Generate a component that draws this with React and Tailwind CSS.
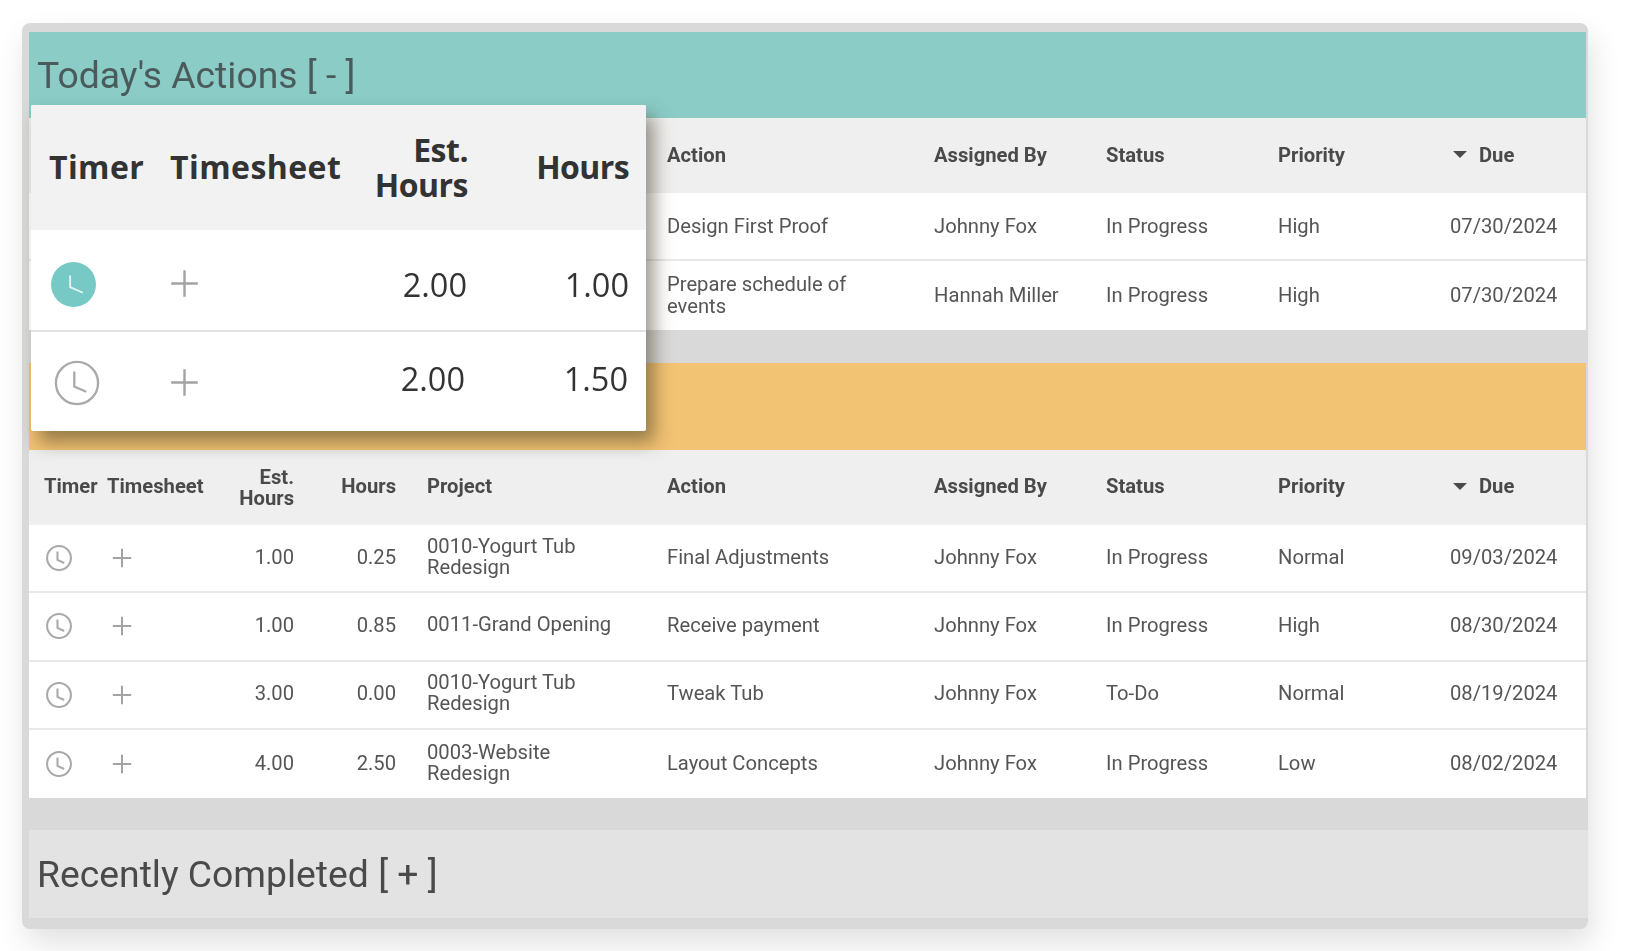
import React from "react";

const cols = "grid grid-cols-[78px_123px_64px_102px_31px_240px_267px_172px_172px_172px_1fr] items-center";

function ClockIcon({ className, hand = "#a9a9a9", ring = "#a9a9a9", width = 1.9 }) {
  return (
    <svg viewBox="0 0 24 24" className={className} fill="none">
      <circle cx="12" cy="12" r="11" stroke={ring} strokeWidth={width} />
      <path d="M10.6 6 V13.8 L16.8 16.6" stroke={hand} strokeWidth={width} />
    </svg>
  );
}

function PlusIcon({ className, width = 2.4 }) {
  return (
    <svg viewBox="0 0 24 24" className={className} fill="none">
      <path d="M12 1 V23 M1 12 H23" stroke="#a3a3a3" strokeWidth={width} />
    </svg>
  );
}

function HeaderRow({ full }) {
  return (
    <div className={`${cols} h-[75px] bg-[#efefef] pb-[2px] font-bold text-[#4a4a4a]`}>
      <div className="pl-[15px]">{full && "Timer"}</div>
      <div>{full && "Timesheet"}</div>
      <div className="pt-[3px] text-right leading-[21px]">
        {full && (
          <>
            Est.
            <br />
            Hours
          </>
        )}
      </div>
      <div className="text-right">{full && "Hours"}</div>
      <div />
      <div>{full && "Project"}</div>
      <div>Action</div>
      <div>Assigned By</div>
      <div>Status</div>
      <div>Priority</div>
      <div className="flex items-center gap-[12px] pl-[3px]">
        <span className="h-0 w-0 border-x-[7px] border-t-[7px] border-x-transparent border-t-[#4a4a4a]" />
        Due
      </div>
    </div>
  );
}

function Row({ row, last }) {
  // rows with a project sit a little higher than their icons
  const lift = row.project ? "pb-[3px]" : "";
  return (
    <div className={`${cols} h-[68.3px] bg-white ${lift} ${last ? "" : "border-b-2 border-[#e9e9e9]"}`}>
      <div className="pl-[17px] pt-[3px]">{row.project && <ClockIcon className="h-[26px] w-[26px]" />}</div>
      <div className="pl-[5px] pt-[3px]">{row.project && <PlusIcon className="h-[20px] w-[20px]" />}</div>
      <div className="text-right">{row.est}</div>
      <div className="text-right">{row.hours}</div>
      <div />
      <div className="w-[205px] leading-[21px]">{row.project}</div>
      <div className="w-[205px]">{row.action}</div>
      <div>{row.by}</div>
      <div>{row.status}</div>
      <div>{row.priority}</div>
      <div>{row.due}</div>
    </div>
  );
}

const todayRows = [
  { action: "Design First Proof", by: "Johnny Fox", status: "In Progress", priority: "High", due: "07/30/2024" },
  { action: "Prepare schedule of events", by: "Hannah Miller", status: "In Progress", priority: "High", due: "07/30/2024" },
];

const upcomingRows = [
  { est: "1.00", hours: "0.25", project: "0010-Yogurt Tub Redesign", action: "Final Adjustments", by: "Johnny Fox", status: "In Progress", priority: "Normal", due: "09/03/2024" },
  { est: "1.00", hours: "0.85", project: "0011-Grand Opening", action: "Receive payment", by: "Johnny Fox", status: "In Progress", priority: "High", due: "08/30/2024" },
  { est: "3.00", hours: "0.00", project: "0010-Yogurt Tub Redesign", action: "Tweak Tub", by: "Johnny Fox", status: "To-Do", priority: "Normal", due: "08/19/2024" },
  { est: "4.00", hours: "2.50", project: "0003-Website Redesign", action: "Layout Concepts", by: "Johnny Fox", status: "In Progress", priority: "Low", due: "08/02/2024" },
];

function TimerPopover() {
  return (
    <div className="absolute left-[9px] top-[82px] w-[615px] rounded-[2px] bg-white font-['Open_Sans',sans-serif] text-[32.5px] text-[#333] shadow-[8px_11px_18px_rgba(60,50,30,0.5)]">
      <div className="flex h-[125px] items-center rounded-t-[2px] bg-[#f2f2f3] pb-[3px] pl-[18px] pr-[17px] text-[32px] font-bold leading-[35px]">
        <div className="w-[121px] tracking-[0.4px]">Timer</div>
        <div className="w-[178px] tracking-[0.45px]">Timesheet</div>
        <div className="w-[120px] pt-[2px] text-right tracking-[-0.5px]">
          Est.
          <br />
          Hours
        </div>
        <div className="flex-1 text-right tracking-[-0.6px]">Hours</div>
      </div>
      <div className="flex h-[102px] items-center border-b-2 border-[#e2e2e2] pl-[20px] pr-[17px] pt-[9px]">
        <div className="w-[119px]">
          <div className="flex h-[45px] w-[45px] items-center justify-center rounded-full bg-[#76c9c4]">
            <svg viewBox="0 0 24 24" className="h-[45px] w-[45px]" fill="none">
              <path d="M10.2 7.2 V13.4 L17 16.4" stroke="#e2f5f3" strokeWidth="1" />
            </svg>
          </div>
        </div>
        <div className="w-[178px] pb-[2px]">
          <PlusIcon className="h-[29px] w-[29px]" width={2} />
        </div>
        <div className="w-[119px] text-right">2.00</div>
        <div className="flex-1 text-right">1.00</div>
      </div>
      <div className="flex h-[99px] items-center pl-[23px] pr-[18px]">
        <div className="w-[116px] pt-[3px]">
          <ClockIcon className="h-[46px] w-[46px]" width={1.2} />
        </div>
        <div className="w-[178px] pt-[1px]">
          <PlusIcon className="h-[29px] w-[29px]" width={2} />
        </div>
        <div className="w-[117px] pb-[5px] text-right">2.00</div>
        <div className="flex-1 pb-[5px] text-right">1.50</div>
      </div>
    </div>
  );
}

export default function App() {
  return (
    <div className="h-[951px] w-[1630px] overflow-hidden bg-white pl-[22px] pt-[23px] font-['Roboto',sans-serif] text-[20.2px] leading-[22px] text-[#555]">
      <div className="relative w-[1566px] rounded-[8px] bg-[#d9d9d9] pb-[11px] pl-[7px] pt-[9px] shadow-[4px_14px_30px_rgba(0,0,0,0.12)] blur-[0.4px]">
        <div className="mr-[2px]">
          <div className="flex h-[86px] items-center bg-[#8bccc7] pl-[8px] text-[37.3px] text-[#4b5a5a]">
            Today's Actions [ - ]
          </div>
          <HeaderRow />
          {todayRows.map((row, i) => (
            <Row key={i} row={row} last={i === todayRows.length - 1} />
          ))}
          <div className="h-[33.4px]" />
          <div className="h-[87px] bg-[#f2c373]" />
          <HeaderRow full />
          {upcomingRows.map((row, i) => (
            <Row key={i} row={row} last={i === upcomingRows.length - 1} />
          ))}
          <div className="h-[32px]" />
        </div>
        <div className="flex h-[88px] items-center bg-[#e3e3e3] pb-[1px] pl-[8px] text-[37.3px] text-[#4a4a4a]">
          Recently Completed [ + ]
        </div>
        <TimerPopover />
      </div>
    </div>
  );
}
